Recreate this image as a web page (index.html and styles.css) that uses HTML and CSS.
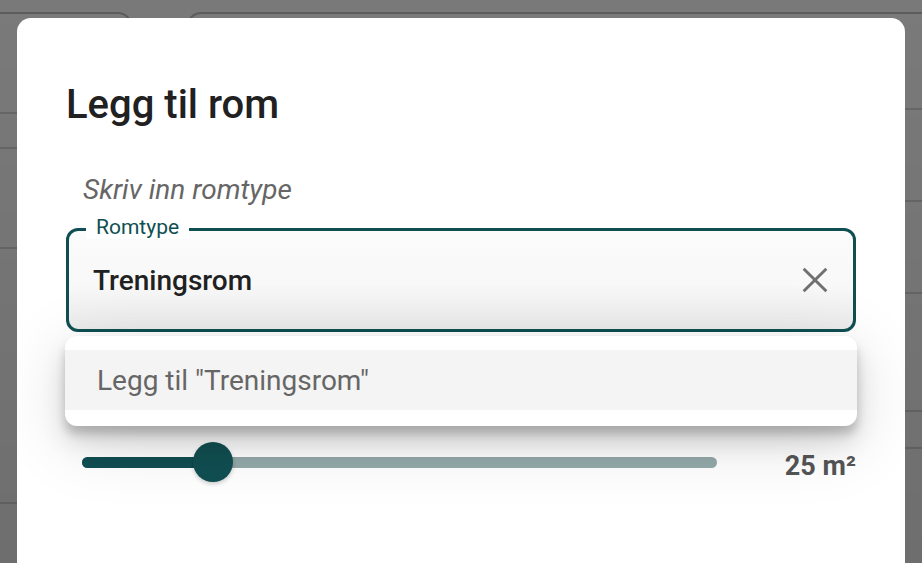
FILE: index.html
```html
<!DOCTYPE html>
<html lang="no">
<head>
<meta charset="utf-8">
<title>Legg til rom</title>
<link rel="stylesheet" href="styles.css">
</head>
<body>
<div class="page">
  <div class="bg-card bg-left">
    <div class="bg-row r1"></div>
    <div class="bg-row r2"></div>
    <div class="bg-row r3"></div>
    <div class="bg-row r4"></div>
  </div>
  <div class="bg-card bg-right">
    <div class="bg-row s1"></div>
    <div class="bg-row s2"></div>
    <div class="bg-row s3"></div>
    <div class="bg-row s4"></div>
    <div class="bg-row s5"></div>
  </div>
</div>
<div class="scrim"></div>
<div class="dialog" role="dialog">
  <h1 class="title">Legg til rom</h1>
  <p class="hint">Skriv inn romtype</p>
  <div class="field-wrap">
    <div class="field">
      <span class="field-label">Romtype</span>
      <span class="field-value">Treningsrom</span>
      <svg class="clear" width="32" height="32" viewBox="0 0 24 24"><path d="M3.5 3.5 L20.5 20.5 M20.5 3.5 L3.5 20.5" stroke="#707070" stroke-width="2.2" fill="none"/></svg>
    </div>
    <div class="menu">
      <div class="menu-item">Legg til "Treningsrom"</div>
    </div>
  </div>
  <div class="slider-row">
    <div class="slider">
      <div class="track"><div class="track-active" style="width:131px"></div></div>
      <div class="thumb" style="left:131px"></div>
    </div>
    <div class="value">25 m²</div>
  </div>
</div>
</body>
</html>
```
FILE: styles.css
```css
html, body {
  margin: 0;
  padding: 0;
  width: 922px;
  height: 563px;
  overflow: hidden;
  font-family: Roboto, "Liberation Sans", sans-serif;
}
body {
  background: #f2f2f2;
}
.page {
  display: flex;
  padding-top: 12px;
  gap: 55px;
  height: 551px;
}
.bg-card {
  border: 2px solid #b8b8b8;
  border-bottom: none;
  background: #f4f4f4;
  display: flex;
  flex-direction: column;
}
.bg-left {
  width: 138px;
  margin-left: -10px;
  border-radius: 0 14px 0 0;
}
.bg-right {
  flex: 1;
  margin-right: -20px;
  border-radius: 14px 0 0 0;
}
.bg-row { border-bottom: 2px solid #d0d0d0; }
.r1 { height: 98px; }
.r2 { height: 33px; }
.r3 { height: 98px; }
.r4 { height: 253px; }
.s1 { height: 94px; }
.s2 { height: 90px; }
.s3 { height: 90px; }
.s4 { height: 116px; }
.s5 { height: 35px; }
.scrim {
  position: fixed;
  inset: 0;
  background: linear-gradient(180deg, rgba(0,0,0,0.5), rgba(0,0,0,0.55));
}
.dialog {
  position: fixed;
  left: 17px;
  top: 18px;
  width: 888px;
  height: 580px;
  background: #fff;
  border-radius: 14px;
  box-sizing: border-box;
  padding: 63px 49px 0 49px;
  display: flex;
  flex-direction: column;
}
.title {
  margin: 0;
  font-size: 40px;
  line-height: 48px;
  font-weight: 500;
  color: #212121;
}
.hint {
  margin: 46px 0 0 17px;
  font-size: 28px;
  line-height: 30px;
  font-style: italic;
  color: #666;
}
.field-wrap {
  position: relative;
  margin-top: 23px;
}
.field {
  position: relative;
  height: 104px;
  box-sizing: border-box;
  border: 3px solid #0f4f52;
  border-radius: 12px;
  background: linear-gradient(180deg, #fbfbfb 0%, #f8f8f8 55%, #ececec 100%);
  display: flex;
  align-items: center;
  padding: 0 22px 0 24px;
}
.field-label {
  position: absolute;
  left: 17px;
  top: -16px;
  padding: 0 10px;
  background: #fff;
  color: #0f4f52;
  font-size: 21px;
  line-height: 24px;
}
.field-value {
  flex: 1;
  font-size: 28px;
  font-weight: 500;
  color: #212121;
}
.clear { display: block; }
.menu {
  position: absolute;
  left: -1px;
  right: -1px;
  top: 108px;
  height: 90px;
  background: #fff;
  border-radius: 12px;
  box-sizing: border-box;
  padding-top: 14px;
  box-shadow: 0 8px 10px rgba(0,0,0,0.18), 0 16px 24px rgba(0,0,0,0.12), 0 14px 70px rgba(0,0,0,0.14);
  z-index: 2;
}
.menu-item {
  height: 60px;
  background: #f4f4f4;
  display: flex;
  align-items: center;
  padding-left: 32px;
  font-size: 28px;
  color: #666;
}
.slider-row {
  display: flex;
  align-items: center;
  margin-top: 110px;
  padding-left: 16px;
}
.slider {
  position: relative;
  width: 635px;
  height: 40px;
  display: flex;
  align-items: center;
}
.track {
  width: 100%;
  height: 11px;
  border-radius: 6px;
  background: #94a9aa;
  overflow: hidden;
}
.track-active {
  height: 100%;
  background: #114f52;
}
.thumb {
  position: absolute;
  top: 0;
  width: 40px;
  height: 40px;
  margin-left: -20px;
  border-radius: 50%;
  background: #114f52;
  box-shadow: 0 2px 4px rgba(0,0,0,0.2);
}
.value {
  margin-left: auto;
  font-size: 27px;
  font-weight: 700;
  color: #555;
  padding-top: 8px;
}
```
